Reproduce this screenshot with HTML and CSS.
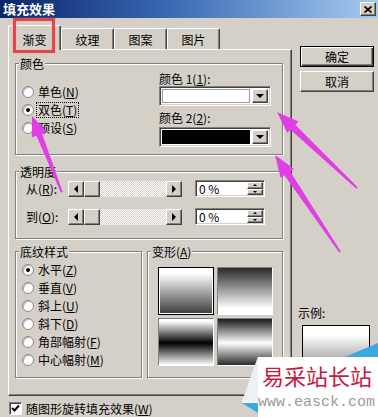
FILE: index.html
```html
<!DOCTYPE html>
<html>
<head>
    <title>填充效果</title>
    <link rel="stylesheet" href="styles.css">
</head>
<body>
    <div class="titlebar">
        <span>填充效果</span>
        <span class="close">
            <svg width="8" height="7" viewBox="0 0 8 7"><path d="M0.5 0.5 L7.5 6.5 M7.5 0.5 L0.5 6.5" stroke="#000" stroke-width="1.8"/></svg>
        </span>
    </div>

    <div class="main">
        <div class="sheet">
            <div class="tabs">
                <div class="tab active">渐变</div>
                <div class="tab">纹理</div>
                <div class="tab">图案</div>
                <div class="tab">图片</div>
            </div>
            <div class="panel">
                <div class="group color-group">
                    <div class="group-title">颜色</div>
                    <div class="color-body">
                        <div class="radio-list color-radios">
                            <div class="radio"><span class="dot"></span><span>单色(<u>N</u>)</span></div>
                            <div class="radio"><span class="dot on"></span><span class="focus">双色(<u>T</u>)</span></div>
                            <div class="radio"><span class="dot"></span><span>预设(<u>S</u>)</span></div>
                        </div>
                        <div class="pickers">
                            <div>颜色 1(<u>1</u>):</div>
                            <div class="combo"><span class="swatch"></span><span class="drop"><i class="tri-down"></i></span></div>
                            <div class="second">颜色 2(<u>2</u>):</div>
                            <div class="combo combo-2"><span class="swatch black"></span><span class="drop"><i class="tri-down"></i></span></div>
                        </div>
                    </div>
                </div>

                <div class="group alpha-group">
                    <div class="group-title">透明度</div>
                    <div class="alpha-row">
                        <span class="row-label">从(<u>R</u>):</span>
                        <div class="scroll">
                            <span class="raised sb-btn"><i class="tri-left"></i></span>
                            <span class="raised sb-thumb"></span>
                            <span class="sb-track"></span>
                            <span class="raised sb-btn"><i class="tri-right"></i></span>
                        </div>
                        <div class="spin">
                            <span class="spin-text">0 %</span>
                            <span class="spin-btns"><span class="raised"><i class="tri-up"></i></span><span class="raised"><i class="tri-down small"></i></span></span>
                        </div>
                    </div>
                    <div class="alpha-row second-row">
                        <span class="row-label">到(<u>O</u>):</span>
                        <div class="scroll">
                            <span class="raised sb-btn"><i class="tri-left"></i></span>
                            <span class="raised sb-thumb"></span>
                            <span class="sb-track"></span>
                            <span class="raised sb-btn"><i class="tri-right"></i></span>
                        </div>
                        <div class="spin">
                            <span class="spin-text">0 %</span>
                            <span class="spin-btns"><span class="raised"><i class="tri-up"></i></span><span class="raised"><i class="tri-down small"></i></span></span>
                        </div>
                    </div>
                </div>

                <div class="bottom-row">
                    <div class="group style-group">
                        <div class="group-title">底纹样式</div>
                        <div class="radio-list style-radios">
                            <div class="radio"><span class="dot on"></span><span>水平(<u>Z</u>)</span></div>
                            <div class="radio"><span class="dot"></span><span>垂直(<u>V</u>)</span></div>
                            <div class="radio"><span class="dot"></span><span>斜上(<u>U</u>)</span></div>
                            <div class="radio"><span class="dot"></span><span>斜下(<u>D</u>)</span></div>
                            <div class="radio"><span class="dot"></span><span>角部幅射(<u>F</u>)</span></div>
                            <div class="radio"><span class="dot"></span><span>中心幅射(<u>M</u>)</span></div>
                        </div>
                    </div>
                    <div class="group variant-group">
                        <div class="group-title">变形(<u>A</u>)</div>
                        <div class="tiles">
                            <span class="tile t1 selected"></span>
                            <span class="tile t2"></span>
                            <span class="tile t3"></span>
                            <span class="tile t4"></span>
                        </div>
                    </div>
                </div>
            </div>
        </div>

        <div class="side">
            <button class="btn default">确定</button>
            <button class="btn">取消</button>
            <div class="sample-label">示例:</div>
            <div class="sample"></div>
        </div>
    </div>

    <div class="check-row">
        <span class="checkbox">
            <svg width="9" height="9" viewBox="0 0 9 9"><path d="M1 4 L3.5 6.5 L8 1.5" stroke="#000" stroke-width="2" fill="none"/></svg>
        </span>
        <span>随图形旋转填充效果(<u>W</u>)</span>
    </div>

    <!-- tutorial annotations over the screenshot -->
    <div class="red-mark"></div>

    <svg class="overlay" width="378" height="417" viewBox="0 0 378 417">
        <polygon points="258,357 378,357 378,417 258,417 258,413 242,402" fill="#fff"/>
        <polygon points="258,357 242,402 258,402" fill="#eef1f4"/>
        <polygon points="345,357 378,343 378,357" fill="#3aa9e0"/>
        <polygon points="242,403 258,403 258,413" fill="#3aa9e0"/>
        <polygon points="32,116 46.8,131.7 42.1,133.5 62.7,192 60.9,192.8 36.5,135.7 31.8,137.5" fill="#e23ee6"/>
        <polygon points="277,112 298.4,121.4 295.3,124.8 357.7,187.3 356.3,188.7 290.5,129.7 287.4,133" fill="#e23ee6"/>
        <polygon points="275,155 293.9,168.8 290.2,171.4 340.8,251.4 339.2,252.6 284.4,175.2 280.6,177.8" fill="#e23ee6"/>
    </svg>

    <div class="watermark">
        <div class="wm-title">易采站长站</div>
        <div class="wm-url">www.easck.com</div>
    </div>
</body>
</html>
```

FILE: styles.css
```css
* {
    box-sizing: border-box;
}
body {
    margin: 0;
    width: 378px;
    height: 417px;
    overflow: hidden;
    position: relative;
    background: #d4d0c8;
    font-family: "Noto Sans CJK SC", sans-serif;
    font-size: 12px;
    line-height: 14px;
    color: #000;
}
u {
    text-decoration: underline;
}
.raised {
    background: #d4d0c8;
    border: 1px solid;
    border-color: #fff #404040 #404040 #fff;
    box-shadow: inset -1px -1px #808080;
}

/* title bar */
.titlebar {
    height: 18px;
    display: flex;
    align-items: center;
    justify-content: space-between;
    padding: 0 2px 0 3px;
    background: linear-gradient(to right, #0a246a, #3a6ab4 45%, #a6caf0);
    color: #fff;
    font-weight: bold;
    font-size: 13px;
}
.close {
    width: 16px;
    height: 14px;
    display: flex;
    align-items: center;
    justify-content: center;
    background: #d4d0c8;
    border: 1px solid;
    border-color: #fff #404040 #404040 #fff;
    box-shadow: inset -1px -1px #808080;
}

.main {
    display: flex;
    padding: 7px 0 0 8px;
}
.sheet {
    width: 284px;
}

/* tabs */
.tabs {
    display: flex;
    align-items: flex-end;
    height: 24px;
}
.tab {
    width: 53px;
    height: 21px;
    padding-top: 4px;
    text-align: center;
    border: 1px solid;
    border-bottom: 0;
    border-color: #fff #404040 transparent #fff;
    border-radius: 2px 2px 0 0;
    box-shadow: inset -1px 0 #808080;
}
.tab.active {
    height: 25px;
    padding-top: 7px;
    margin-bottom: -1px;
    position: relative;
    z-index: 1;
    background: #d4d0c8;
}

.panel {
    height: 347px;
    padding: 13px 8px 0 6px;
    border: 1px solid;
    border-color: #fff #404040 #404040 #fff;
    box-shadow: inset -1px -1px #808080;
}

/* group boxes */
.group {
    border: 1px solid #808080;
    box-shadow: inset 1px 1px #fff, 1px 1px #fff;
}
.group-title {
    width: fit-content;
    margin: -7px 0 0 3px;
    padding: 0 1px;
    background: #d4d0c8;
}

.radio {
    display: flex;
    align-items: center;
    gap: 4px;
    height: 18px;
}
.dot {
    width: 12px;
    height: 12px;
    border-radius: 50%;
    background: #fff;
    border: 1px solid #8a8a8a;
    box-shadow: inset 1px 1px #b8b8b8;
    display: flex;
    align-items: center;
    justify-content: center;
}
.dot.on::after {
    content: "";
    width: 4px;
    height: 4px;
    border-radius: 50%;
    background: #000;
}
.focus {
    outline: 1px dotted #000;
    outline-offset: 0;
    padding: 0 1px;
    margin-left: -1px;
}

.color-body {
    display: flex;
    padding: 0 11px 7px 6px;
}
.color-radios {
    padding-top: 12px;
}
.pickers {
    margin-left: auto;
    width: 112px;
    padding-top: 1px;
}
.pickers .second {
    margin-top: 5px;
}
.combo {
    height: 20px;
    display: flex;
    padding: 2px;
    gap: 2px;
    background: #fff;
    border: 1px solid;
    border-color: #808080 #fff #fff #808080;
    box-shadow: inset 1px 1px #404040, inset -1px -1px #d4d0c8;
}
.combo-2 {
    margin-top: 2px;
}
.swatch {
    flex: 1;
    border: 1px solid #9a9a9a;
    background: #fff;
}
.swatch.black {
    background: #000;
    border-color: #000;
}
.drop {
    width: 16px;
    display: flex;
    align-items: center;
    justify-content: center;
    background: #d4d0c8;
    border: 1px solid;
    border-color: #fff #404040 #404040 #fff;
    box-shadow: inset -1px -1px #808080;
}

.tri-down {
    border-top: 4px solid #000;
    border-left: 4px solid transparent;
    border-right: 4px solid transparent;
}
.tri-up {
    border-bottom: 2px solid #000;
    border-left: 2px solid transparent;
    border-right: 2px solid transparent;
}
.tri-down.small {
    border-top-width: 2px;
    border-left-width: 2px;
    border-right-width: 2px;
}
.tri-left {
    border-right: 4px solid #000;
    border-top: 4px solid transparent;
    border-bottom: 4px solid transparent;
}
.tri-right {
    border-left: 4px solid #000;
    border-top: 4px solid transparent;
    border-bottom: 4px solid transparent;
}

/* transparency */
.alpha-group {
    margin-top: 16px;
    padding-bottom: 13px;
}
.alpha-row {
    display: flex;
    align-items: center;
    height: 17px;
    margin-top: 1px;
    padding-left: 10px;
}
.alpha-row.second-row {
    margin-top: 11px;
}
.row-label {
    width: 42px;
}
.scroll {
    width: 114px;
    height: 16px;
    display: flex;
}
.sb-btn {
    width: 16px;
    display: flex;
    align-items: center;
    justify-content: center;
}
.sb-thumb {
    width: 16px;
}
.sb-track {
    flex: 1;
    background: repeating-conic-gradient(#fff 0 25%, #d4d0c8 0 50%) 0 0 / 2px 2px;
}
.spin {
    width: 70px;
    height: 17px;
    margin-left: 13px;
    display: flex;
    padding: 2px 1px 1px 3px;
    background: #fff;
    border: 1px solid;
    border-color: #808080 #fff #fff #808080;
    box-shadow: inset 1px 1px #404040, inset -1px -1px #d4d0c8;
}
.spin-text {
    flex: 1;
    line-height: 12px;
}
.spin-btns {
    width: 16px;
    display: flex;
    flex-direction: column;
    margin: -1px 0 0;
}
.spin-btns .raised {
    flex: 1;
    display: flex;
    align-items: center;
    justify-content: center;
}

/* bottom groups */
.bottom-row {
    display: flex;
    gap: 5px;
    margin-top: 12px;
}
.style-group {
    width: 127px;
    height: 127px;
}
.style-radios {
    margin-top: 2px;
    padding-left: 6px;
}
.variant-group {
    flex: 1;
    height: 127px;
}
.tiles {
    display: grid;
    grid-template-columns: 56px 56px;
    grid-auto-rows: 48px;
    gap: 3px;
    margin: 8px 0 0 10px;
}
.tile {
    border: 1px solid;
    border-color: #808080 #fff #fff #808080;
}
.tile.selected {
    border-color: #000;
    box-shadow: inset 0 0 0 1px #fff;
}
.t1 {
    background: linear-gradient(#fff 12%, #3a3a3a);
}
.t2 {
    background: linear-gradient(#2a2a2a, #fff 88%);
}
.t3 {
    background: linear-gradient(#fff 5%, #000 52%, #fff);
}
.t4 {
    background: linear-gradient(#1a1a1a, #fff 52%, #2a2a2a);
}

/* right column */
.side {
    width: 74px;
    margin-left: 8px;
    padding-top: 21px;
    display: flex;
    flex-direction: column;
}
.btn {
    height: 21px;
    width: 74px;
    padding: 0;
    font: inherit;
    color: #000;
    background: #d4d0c8;
    border: 1px solid;
    border-color: #fff #404040 #404040 #fff;
    box-shadow: inset -1px -1px #808080;
}
.btn.default {
    border-color: #000;
    box-shadow: inset 1px 1px #fff, inset -1px -1px #404040, inset -2px -2px #808080;
}
.btn + .btn {
    margin-top: 4px;
}
.sample-label {
    margin-top: 214px;
    margin-left: -2px;
}
.sample {
    width: 68px;
    height: 62px;
    margin: 5px 0 0 2px;
    border: 1px solid #000;
    background: linear-gradient(#fff 15%, #555);
}

/* checkbox line */
.check-row {
    display: flex;
    align-items: center;
    gap: 4px;
    height: 15px;
    margin-top: 5px;
    padding-left: 9px;
}
.checkbox {
    width: 13px;
    height: 13px;
    display: flex;
    align-items: center;
    justify-content: center;
    background: #fff;
    border: 1px solid;
    border-color: #808080 #fff #fff #808080;
    box-shadow: inset 1px 1px #404040;
}

/* annotations */
.red-mark {
    position: absolute;
    z-index: 5;
    left: 13px;
    top: 18px;
    width: 42px;
    height: 35px;
    border: 3px solid #e3474a;
    box-shadow: 0 0 1px #f08a8a, inset 0 0 1px #f08a8a;
}
.overlay {
    position: absolute;
    z-index: 5;
    left: 0;
    top: 0;
    pointer-events: none;
}
.watermark {
    position: absolute;
    z-index: 6;
    left: 258px;
    top: 363px;
    width: 120px;
}
.wm-title {
    padding-left: 4px;
    font-size: 22px;
    line-height: 24px;
    color: #c8193f;
    white-space: nowrap;
}
.wm-url {
    margin-top: 8px;
    font-family: "Liberation Mono", monospace;
    font-size: 15px;
    line-height: 16px;
    color: #9a9a9a;
    white-space: nowrap;
}
```
